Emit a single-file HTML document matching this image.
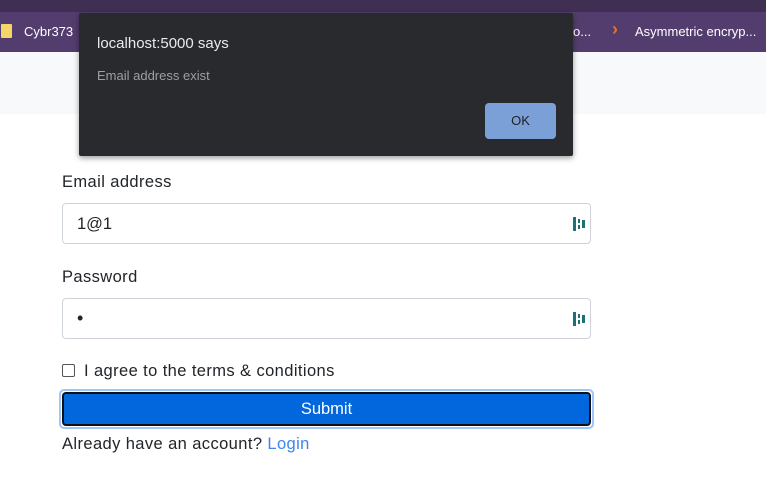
<!DOCTYPE html>
<html><head><style>
body{margin:0;width:766px;height:480px;overflow:hidden;background:#fff;font-family:"Liberation Sans",sans-serif;position:relative}
.top{position:absolute;left:0;top:0;width:766px;height:12px;background:#3f2f52}
.bm{position:absolute;left:0;top:12px;width:766px;height:40px;background:#533d6e;color:#fff;font-size:13px}
.light{position:absolute;left:0;top:52px;width:766px;height:62px;background:#f8f9fa}
.lbl{position:absolute;left:62px;font-size:16.5px;letter-spacing:0.4px;color:#212529}
.inp{position:absolute;left:62px;width:529px;height:41px;border:1px solid #ced4da;border-radius:4px;background:#fff;box-sizing:border-box}
.inp span{position:absolute;left:14px;top:11px;font-size:16.5px;color:#212529}
.ic{position:absolute;right:4px;top:12px}
.dlg{position:absolute;left:79px;top:13px;width:494px;height:143px;background:#292a2d;border-radius:2px;box-shadow:0 2px 6px rgba(0,0,0,.4)}
</style></head><body>
<div class="top"></div>
<div class="bm">
<div style="position:absolute;left:1px;top:12px;width:11px;height:14px;background:#f6d46a;border-radius:1px"></div>
<div style="position:absolute;left:24px;top:12px">Cybr373</div>
<div style="position:absolute;left:573px;top:12px">o...</div>
<div style="position:absolute;left:612px;top:7px;color:#e8702a;font-size:18px;font-weight:bold">›</div>
<div style="position:absolute;left:635px;top:12px">Asymmetric encryp...</div>
</div>
<div class="light"></div>
<div class="lbl" style="top:173px">Email address</div>
<div class="inp" style="top:203px"><span>1@1</span><svg class="ic" width="14" height="16"><rect x="1" y="1" width="3" height="14" fill="#1d6f7a"/><rect x="6" y="3" width="2" height="4" fill="#1d6f7a"/><rect x="6" y="9" width="2" height="4" fill="#1d6f7a"/><rect x="10" y="4" width="3" height="8" fill="#1d6f7a"/></svg></div>
<div class="lbl" style="top:268px">Password</div>
<div class="inp" style="top:298px"><span style="font-size:18px;top:9px">•</span><svg class="ic" width="14" height="16"><rect x="1" y="1" width="3" height="14" fill="#1d6f7a"/><rect x="6" y="3" width="2" height="4" fill="#1d6f7a"/><rect x="6" y="9" width="2" height="4" fill="#1d6f7a"/><rect x="10" y="4" width="3" height="8" fill="#1d6f7a"/></svg></div>
<div style="position:absolute;left:62px;top:364px;width:13px;height:13px;border:1px solid #555;border-radius:2px;box-sizing:border-box"></div>
<div class="lbl" style="left:84px;top:362px">I agree to the terms &amp; conditions</div>
<div style="position:absolute;left:59px;top:389px;width:535px;height:40px;border:2px solid #9ec5fe;box-sizing:border-box;border-radius:5px"></div>
<div style="position:absolute;left:62px;top:392px;width:529px;height:34px;background:#0266dd;border:2px solid #111;box-sizing:border-box;border-radius:4px;color:#fff;font-size:16.5px;text-align:center;line-height:30px">Submit</div>
<div class="lbl" style="top:435px">Already have an account? <span style="color:#3d85f0">Login</span></div>
<div class="dlg">
<div style="position:absolute;left:18px;top:22px;color:#e8eaed;font-size:15px">localhost:5000 says</div>
<div style="position:absolute;left:18px;top:55px;color:#9aa0a6;font-size:13px">Email address exist</div>
<div style="position:absolute;left:406px;top:90px;width:71px;height:36px;background:#7ba0d8;border-radius:4px;color:#202124;font-size:13px;text-align:center;line-height:36px">OK</div>
</div>
</body></html>
